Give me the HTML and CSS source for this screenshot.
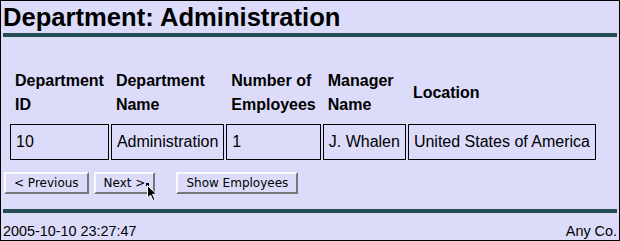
FILE: index.html
```
<!DOCTYPE html>
<html>
<head>
<meta charset="utf-8">
<title>Department: Administration</title>
<link rel="stylesheet" href="styles.css">
</head>
<body>
<div class="page">
  <h1 class="title">Department: Administration</h1>
  <table class="dept">
    <thead>
      <tr>
        <th>Department<br>ID</th>
        <th>Department<br>Name</th>
        <th>Number of<br>Employees</th>
        <th>Manager<br>Name</th>
        <th>Location</th>
      </tr>
    </thead>
    <tbody>
      <tr>
        <td>10</td>
        <td>Administration</td>
        <td>1</td>
        <td>J. Whalen</td>
        <td>United States of America</td>
      </tr>
    </tbody>
  </table>
  <div class="actions">
    <button class="btn btn-prev" type="button">&lt; Previous</button>
    <button class="btn btn-next" type="button">Next &gt;</button>
    <button class="btn" type="button">Show Employees</button>
  </div>
  <div class="footer">
    <span class="date">2005-10-10 23:27:47</span>
    <span class="company">Any Co.</span>
  </div>
  <div class="cursor">
    <span class="cursor-dot"></span>
    <svg class="cursor-arrow" width="12" height="17" viewBox="0 0 12 17">
      <path d="M0.5 0.5 L0.5 13 L3.5 10 L6 15.5 L8 14.5 L5.6 9.2 L9.6 9.2 Z" fill="#000" stroke="#fff" stroke-width="1"/>
    </svg>
  </div>
</div>
</body>
</html>
```
FILE: styles.css
```
html, body {
  margin: 0;
  padding: 0;
}
body {
  background: #dcdcfa;
  color: #000;
  font-family: "Liberation Sans", Arial, sans-serif;
  font-size: 16px;
}
.page {
  position: relative;
  box-sizing: border-box;
  width: 620px;
  height: 241px;
  border: 1px solid #000;
  padding: 0 2px;
  overflow: hidden;
}
.title {
  margin: 0;
  font-size: 25.6px;
  line-height: 32px;
  font-weight: bold;
  border-bottom: 4px solid #264d56;
}
.dept {
  margin-top: 20px;
  padding: 5px;
  border-spacing: 2px;
  line-height: 24px;
}
.dept th {
  text-align: left;
  padding: 5px;
  font-weight: bold;
  vertical-align: middle;
}
.dept td {
  text-align: left;
  padding: 5px;
  border: 1px solid #000;
}
.actions {
  display: flex;
  margin-top: 5px;
  padding-left: 1px;
}
.btn {
  font-family: "DejaVu Sans", Verdana, sans-serif;
  font-size: 12px;
  line-height: 14px;
  height: 22px;
  padding: 0 8px;
  margin: 0;
  background: #dcdcfa;
  color: #000;
  border: 2px solid;
  border-color: #fbfbff #767676 #767676 #fbfbff;
  border-radius: 0;
}
.btn-prev {
  margin-right: 5px;
}
.btn-next {
  margin-right: 21px;
}
.footer {
  margin-top: 15px;
  border-top: 4px solid #264d56;
  padding-top: 9px;
  display: flex;
  justify-content: space-between;
  font-size: 14.4px;
  line-height: 18px;
}
.cursor {
  position: absolute;
  left: 145px;
  top: 182px;
  width: 14px;
  height: 20px;
}
.cursor-dot {
  position: absolute;
  left: 0;
  top: 0;
  width: 3px;
  height: 3px;
  background: #000;
}
.cursor-arrow {
  position: absolute;
  left: 1px;
  top: 2px;
}
```
